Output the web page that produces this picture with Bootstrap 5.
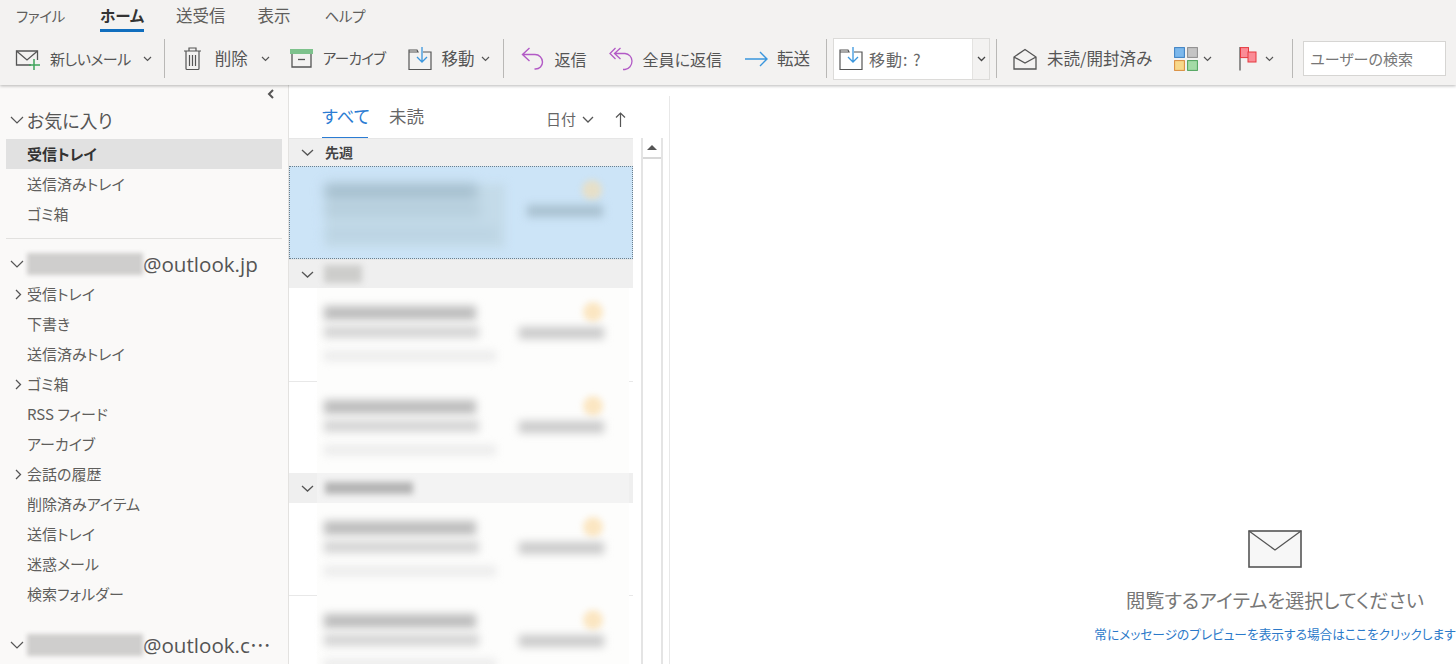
<!DOCTYPE html>
<html lang="ja">
<head>
<meta charset="UTF-8">
<title>Outlook</title>
<link href="https://cdn.jsdelivr.net/npm/bootstrap@5.3.0/dist/css/bootstrap.min.css" rel="stylesheet">
<style>
html, body { height: 100%; overflow: hidden; }
body { font-family: "Noto Sans CJK JP", "Liberation Sans", sans-serif; color: #555; background: #fff; font-size: 16px; font-feature-settings: "palt"; }
.app { width: 1456px; height: 664px; }

/* ribbon */
.ribbon { height: 85px; background: #f3f2f1; box-shadow: 0 1px 3px rgba(0,0,0,.28); position: relative; z-index: 2; }
.tabs { height: 32px; padding-left: 16px; gap: 32px; font-size: 16.5px; }
.tab-item { height: 32px; line-height: 31px; color: #605e5c; white-space: nowrap; }
.tab-kana { font-size: 14.5px; letter-spacing: -.3px; }
.tab-help { margin-left: 2px; }
.tab-item.on { color: #333; font-size: 15.5px; font-weight: 700; border-bottom: 3px solid #106ebe; width: 44px; margin-left: 3px; text-align: center; }
.tools { height: 53px; padding-left: 15px; }
.tool { white-space: nowrap; line-height: 1; }
.tool svg { display: block; flex: none; }
.txt-kanji { font-size: 16.5px; }
.txt-kana { font-size: 15px; letter-spacing: -.5px; }
.txt-arch { font-size: 14.5px; letter-spacing: -.6px; }
.vsep { width: 1px; height: 39px; background: #b9b8b6; flex: none; }
.chev { flex: none; }
.combo { width: 157px; height: 42px; background: #fff; border: 1px solid #dcdbd9; flex: none; }
.combo-label { font-size: 16px; letter-spacing: 1px; font-feature-settings: normal; color: #666; }
.combo-btn { width: 17px; background: #f3f2f1; border-left: 1px solid #e4e3e1; }
.search-box { width: 143px; height: 35px; border: 1px solid #d6d5d3; background: #fff; color: #777; font-size: 15px; padding-left: 6px; line-height: 33px; flex: none; white-space: nowrap; }

/* folders */
.folders { width: 289px; background: #faf9f8; border-right: 1px solid #e3e2e0; flex: none; }
.collapse-arrow { height: 21px; padding-right: 13px; padding-top: 4px; }
.fold-head { height: 28px; font-size: 18px; color: #555; padding-left: 10px; gap: 3px; white-space: nowrap; margin-bottom: 5px; }
.fold-acct { height: 30px; margin-bottom: 0; }
.fold-last { margin-top: 21px; }
.acct-text { margin-left: -3px; font-family: "Open Sans", "Noto Sans CJK JP", sans-serif; font-size: 20.6px; }
.fold-row { height: 30px; line-height: 29px; padding-left: 27px; font-size: 15px; color: #5f5e5c; position: relative; white-space: nowrap; }
.fold-row.sel { margin: 0 6px; padding-left: 21px; background: #e1e1e1; font-weight: 700; color: #333; }
.fold-exp { position: absolute; left: 15px; top: 10px; }
.fold-rule { height: 1px; background: #e2e1df; margin: 9px 6px 10px; }
.blur-name { width: 116px; height: 22px; background: #cfcecd; filter: blur(2px); flex: none; }

/* list */
.list-col { width: 352px; flex: none; margin-top: 11px; }
.list-main { width: 344px; }
.filters { height: 42px; padding-left: 33px; padding-right: 7px; }
.flt { font-size: 17.5px; height: 42px; line-height: 40px; color: #666; white-space: nowrap; }
.flt.on { color: #2b7cd3; border-bottom: 1px solid #2b7cd3; width: 46px; margin-right: 21px; text-align: center; }
.sorter { font-size: 15px; color: #666; height: 46px; }
.grp { background: #efefef; padding-left: 12px; font-size: 14px; font-weight: 700; color: #444; border-top: 1px solid #e6e6e6; position: relative; height: 29px; }
.grp-first { height: 28px; }
.grp-tall { height: 30px; border-top: 0; }
.msg { height: 93px; border-bottom: 1px solid #e8e8e8; position: relative; }
.msg-a { height: 94px; }
.msg-b { height: 91px; border-bottom: 0; }
.msg.picked { background: #cce4f7; border: 1px dotted #6d7f8c; }
.patch { position: absolute; left: 28px; right: 4px; top: 0; bottom: -1px; background: #fdfdfc; padding: 18px 25px 0 7px; }
.msg.picked .patch { background: transparent; padding-top: 17px; }
.lines { width: 180px; }
.msg.picked .lines { background: #c4dbe9; filter: blur(4px); height: 64px; }
.bar { filter: blur(4px); }
.bar-a { width: 152px; height: 14px; margin-bottom: 6px; background: #bdbdbd; }
.bar-b { width: 155px; height: 12px; margin-bottom: 13px; background: #d4d4d4; }
.bar-c { width: 172px; height: 10px; background: #ebebeb; }
.msg.picked .bar-a { background: #a3bccb; }
.msg.picked .bar-b { background: #b4ccda; }
.msg.picked .bar-c { background: #b9d2e1; }
.meta { width: 92px; margin-top: -4px; }
.dot { width: 20px; height: 20px; border-radius: 50%; background: #fbe6c2; filter: blur(3px); margin: 0 1px 5px 0; }
.msg.picked .dot { background: #e6dfc8; }
.msg-date { width: 85px; height: 12px; background: #cacaca; filter: blur(4px); }
.msg.picked .msg-date { background: #a9c1d0; width: 76px; }
.grp-patch { position: absolute; left: 28px; right: 4px; top: 0; bottom: 0; background: #f3f3f3; padding: 9px 0 0 8px; }
.grp-bar { width: 88px; height: 12px; background: #b4b4b4; filter: blur(3px); }
.grp-blur { width: 38px; height: 18px; margin-left: 10px; background: #cdcdcb; filter: blur(3px); }

/* scrollbar */
.scroll-track { width: 22px; flex: none; border-left: 2px solid #e4e4e4; border-right: 2px solid #e4e4e4; margin-top: 53px; }
.scroll-up { height: 21px; border-bottom: 2px solid #d8d8d8; background: #fff; }

/* reading pane */
.reading { padding-bottom: 22px; margin-left: 6px; border-left: 1px solid #e8e8e8; margin-top: 11px; overflow: hidden; }
.read-title { font-size: 19.2px; color: #777; margin-top: 19px; line-height: 26px; white-space: nowrap; }
.read-link { font-size: 12.7px; color: #2b79c9; margin-top: 13px; white-space: nowrap; line-height: 16px; }
.read-box { width: 362px; }
</style>
</head>
<body>
<div class="app d-flex flex-column">

  <!-- ribbon -->
  <div class="ribbon">
    <div class="tabs d-flex">
      <div class="tab-item tab-kana">ファイル</div>
      <div class="tab-item on">ホーム</div>
      <div class="tab-item">送受信</div>
      <div class="tab-item">表示</div>
      <div class="tab-item tab-kana tab-help">ヘルプ</div>
    </div>
    <div class="tools d-flex align-items-center">
      <div class="tool d-flex align-items-center">
        <svg width="26" height="24" viewBox="0 0 26 24" fill="none"><path d="M16 18H1.5V4h21v9" stroke="#555" stroke-width="1.3"/><path d="M1.5 4l10.5 9 10.5-9" stroke="#555" stroke-width="1.3"/><path d="M19 12v11M14 18h11" stroke="#3fa45b" stroke-width="1.5"/></svg>
        <span class="txt-kana" style="margin-left:9px">新しいメール</span>
        <svg class="chev" style="margin-left:12px" width="9" height="6" viewBox="0 0 9 6" fill="none"><path d="M1 1l3.5 3.5L8 1" stroke="#555" stroke-width="1.2"/></svg>
      </div>
      <div class="vsep" style="margin-left:12px"></div>
      <div class="tool d-flex align-items-center" style="margin-left:18px">
        <svg width="19" height="25" viewBox="0 0 19 25" fill="none" stroke="#555" stroke-width="1.2"><path d="M1 5h17M6 5V2h7v3M3 5v17.5a1 1 0 0 0 1 1h11a1 1 0 0 0 1-1V5M6.5 9v11M9.5 9v11M12.5 9v11"/></svg>
        <span class="txt-kanji" style="margin-left:13px">削除</span>
        <svg class="chev" style="margin-left:13px" width="9" height="6" viewBox="0 0 9 6" fill="none"><path d="M1 1l3.5 3.5L8 1" stroke="#555" stroke-width="1.2"/></svg>
      </div>
      <div class="tool d-flex align-items-center" style="margin-left:20px">
        <svg width="23" height="19" viewBox="0 0 23 19" fill="none"><rect x="0" y="0" width="23" height="5" fill="#7dc28c"/><path d="M2 5v13h19V5" stroke="#555" stroke-width="1.3"/><path d="M8 10.5h7" stroke="#555" stroke-width="1.3"/></svg>
        <span class="txt-arch" style="margin-left:10px">アーカイブ</span>
      </div>
      <div class="tool d-flex align-items-center" style="margin-left:22px">
        <svg width="24" height="24" viewBox="0 0 24 24" fill="none"><path d="M1 5V3h8l1 2H1v17.5h22V5h-8" stroke="#555" stroke-width="1.2"/><path d="M14 0v15M9 10l5 5 5-5" stroke="#3a96dd" stroke-width="1.3"/></svg>
        <span class="txt-kanji" style="margin-left:10px">移動</span>
        <svg class="chev" style="margin-left:6px" width="9" height="6" viewBox="0 0 9 6" fill="none"><path d="M1 1l3.5 3.5L8 1" stroke="#555" stroke-width="1.2"/></svg>
      </div>
      <div class="vsep" style="margin-left:13px"></div>
      <div class="tool d-flex align-items-center" style="margin-left:17px">
        <svg width="23" height="24" viewBox="0 0 23 24" fill="none" stroke="#b25ac6" stroke-width="1.4"><path d="M8.5 1L1.5 7.5l7 6.500M1.5 7.500H14a7.500 7.500 0 0 1 7.500 7.500c0 4-3 7-7 7h-1"/></svg>
        <span style="margin-left:11px">返信</span>
      </div>
      <div class="tool d-flex align-items-center" style="margin-left:22px">
        <svg width="24" height="24" viewBox="0 0 24 24" fill="none" stroke="#b25ac6" stroke-width="1.3"><path d="M6.500 1L1 6.500 6.500 12M11.500 1L5.500 6.500l6 5.500M5.500 6.500H16a7.500 7.500 0 0 1 7 7.500c0 4.500-3 8-7 8.500h-2"/></svg>
        <span style="margin-left:10px">全員に返信</span>
      </div>
      <div class="tool d-flex align-items-center" style="margin-left:23px">
        <svg width="23" height="16" viewBox="0 0 23 16" fill="none" stroke="#3a96dd" stroke-width="1.4"><path d="M0 8h22M15 1l7 7-7 7"/></svg>
        <span class="txt-kanji" style="margin-left:9px">転送</span>
      </div>
      <div class="vsep" style="margin-left:16px"></div>
      <div class="combo d-flex" style="margin-left:6px">
        <div class="flex-grow-1 d-flex align-items-center" style="padding-left:5px">
          <svg width="24" height="24" viewBox="0 0 24 24" fill="none"><path d="M1 5V3h8l1 2H1v17.500h22V5h-8" stroke="#555" stroke-width="1.2"/><path d="M14 0v15M9 10l5 5 5-5" stroke="#3a96dd" stroke-width="1.3"/></svg>
          <span class="combo-label" style="margin-left:6px">移動: ?</span>
        </div>
        <div class="combo-btn d-flex align-items-center justify-content-center">
          <svg width="9" height="6" viewBox="0 0 9 6" fill="none"><path d="M1 1l3.500 3.500L8 1" stroke="#444" stroke-width="1.300"/></svg>
        </div>
      </div>
      <div class="vsep" style="margin-left:6px"></div>
      <div class="tool d-flex align-items-center" style="margin-left:16px">
        <svg width="24" height="22" viewBox="0 0 24 22" fill="none" stroke="#555" stroke-width="1.300"><path d="M1 9v12h22V9L12 1.500zM1 9l11 6 11-6"/></svg>
        <span class="txt-kanji" style="margin-left:10px">未読/開封済み</span>
      </div>
      <div class="tool d-flex align-items-center" style="margin-left:22px">
        <svg width="24" height="24" viewBox="0 0 24 24"><rect x=".6" y=".6" width="9.800" height="9.800" fill="#7cb8ec" stroke="#3a7fc2"/><rect x="13.600" y=".6" width="9.800" height="9.800" fill="#c4c4c4" stroke="#8c8c8c"/><rect x=".6" y="13.600" width="9.800" height="9.800" fill="#f8d88a" stroke="#d98b3a"/><rect x="13.600" y="13.600" width="9.800" height="9.800" fill="#a4dba6" stroke="#4ca25a"/></svg>
        <svg class="chev" style="margin-left:5px" width="9" height="6" viewBox="0 0 9 6" fill="none"><path d="M1 1l3.500 3.500L8 1" stroke="#555" stroke-width="1.200"/></svg>
      </div>
      <div class="tool d-flex align-items-center" style="margin-left:27px">
        <svg width="18" height="24" viewBox="0 0 18 24"><path d="M1 0v23.500" stroke="#777" stroke-width="1.600"/><rect x="1.500" y=".6" width="8" height="10" fill="#fb8c96" stroke="#e5393f"/><rect x="9" y="5" width="8" height="10" fill="#fb8c96" stroke="#e5393f"/></svg>
        <svg class="chev" style="margin-left:8px" width="9" height="6" viewBox="0 0 9 6" fill="none"><path d="M1 1l3.500 3.500L8 1" stroke="#555" stroke-width="1.200"/></svg>
      </div>
      <div class="vsep" style="margin-left:18px"></div>
      <div class="search-box" style="margin-left:10px">ユーザーの検索</div>
    </div>
  </div>

  <div class="d-flex flex-grow-1 overflow-hidden">
    <!-- folder pane -->
    <div class="folders">
      <div class="collapse-arrow d-flex justify-content-end">
        <svg width="8" height="10" viewBox="0 0 8 10" fill="none"><path d="M6 1L2 5l4 4" stroke="#555" stroke-width="2"/></svg>
      </div>
      <div class="fold-head d-flex align-items-center">
        <svg width="14" height="8" viewBox="0 0 14 8" fill="none"><path d="M1 1l6 6 6-6" stroke="#555" stroke-width="1.200"/></svg>
        <span>お気に入り</span>
      </div>
      <div class="fold-row sel">受信トレイ</div>
      <div class="fold-row">送信済みトレイ</div>
      <div class="fold-row">ゴミ箱</div>
      <div class="fold-rule"></div>
      <div class="fold-head fold-acct d-flex align-items-center">
        <svg width="14" height="8" viewBox="0 0 14 8" fill="none"><path d="M1 1l6 6 6-6" stroke="#555" stroke-width="1.200"/></svg>
        <div class="blur-name"></div><span class="acct-text">@outlook.jp</span>
      </div>
      <div class="fold-row"><svg class="fold-exp" width="7" height="11" viewBox="0 0 7 11" fill="none"><path d="M1 1l4.500 4.500L1 10" stroke="#555" stroke-width="1.300"/></svg>受信トレイ</div>
      <div class="fold-row">下書き</div>
      <div class="fold-row">送信済みトレイ</div>
      <div class="fold-row"><svg class="fold-exp" width="7" height="11" viewBox="0 0 7 11" fill="none"><path d="M1 1l4.500 4.500L1 10" stroke="#555" stroke-width="1.300"/></svg>ゴミ箱</div>
      <div class="fold-row">RSS フィード</div>
      <div class="fold-row">アーカイブ</div>
      <div class="fold-row"><svg class="fold-exp" width="7" height="11" viewBox="0 0 7 11" fill="none"><path d="M1 1l4.500 4.500L1 10" stroke="#555" stroke-width="1.300"/></svg>会話の履歴</div>
      <div class="fold-row">削除済みアイテム</div>
      <div class="fold-row">送信トレイ</div>
      <div class="fold-row">迷惑メール</div>
      <div class="fold-row">検索フォルダー</div>
      <div class="fold-head fold-acct fold-last d-flex align-items-center">
        <svg width="14" height="8" viewBox="0 0 14 8" fill="none"><path d="M1 1l6 6 6-6" stroke="#555" stroke-width="1.200"/></svg>
        <div class="blur-name"></div><span class="acct-text">@outlook.c⋯</span>
      </div>
    </div>

    <!-- message list -->
    <div class="list-col">
      <div class="list-main">
        <div class="filters d-flex">
          <div class="flt on">すべて</div>
          <div class="flt">未読</div>
          <div class="sorter ms-auto d-flex align-items-center">
            <span>日付</span>
            <svg style="margin-left:6px" width="12" height="7" viewBox="0 0 12 7" fill="none"><path d="M1 1l5 5 5-5" stroke="#555" stroke-width="1.300"/></svg>
            <svg style="margin-left:21px" width="11" height="15" viewBox="0 0 11 15" fill="none"><path d="M5.500 15V1M1 5.500L5.500 1 10 5.500" stroke="#555" stroke-width="1.200"/></svg>
          </div>
        </div>
        <div class="grp grp-first d-flex align-items-center">
          <svg width="13" height="7" viewBox="0 0 13 7" fill="none"><path d="M1 1l5.500 5L12 1" stroke="#555" stroke-width="1.300"/></svg>
          <span style="margin-left:11px">先週</span>
        </div>
        <div class="msg picked">
          <div class="patch d-flex justify-content-between">
            <div class="lines"><div class="bar bar-a"></div><div class="bar bar-b"></div><div class="bar bar-c"></div></div>
            <div class="meta d-flex flex-column align-items-end"><div class="dot"></div><div class="msg-date"></div></div>
          </div>
        </div>
        <div class="grp d-flex align-items-center">
          <svg width="13" height="7" viewBox="0 0 13 7" fill="none"><path d="M1 1l5.500 5L12 1" stroke="#555" stroke-width="1.300"/></svg>
          <div class="grp-blur"></div>
        </div>
        <div class="msg msg-a">
          <div class="patch d-flex justify-content-between">
            <div class="lines"><div class="bar bar-a"></div><div class="bar bar-b"></div><div class="bar bar-c"></div></div>
            <div class="meta d-flex flex-column align-items-end"><div class="dot"></div><div class="msg-date"></div></div>
          </div>
        </div>
        <div class="msg msg-b">
          <div class="patch d-flex justify-content-between">
            <div class="lines"><div class="bar bar-a"></div><div class="bar bar-b"></div><div class="bar bar-c"></div></div>
            <div class="meta d-flex flex-column align-items-end"><div class="dot"></div><div class="msg-date"></div></div>
          </div>
        </div>
        <div class="grp grp-tall d-flex align-items-center">
          <svg width="13" height="7" viewBox="0 0 13 7" fill="none"><path d="M1 1l5.500 5L12 1" stroke="#555" stroke-width="1.300"/></svg>
          <div class="grp-patch"><div class="grp-bar"></div></div>
        </div>
        <div class="msg">
          <div class="patch d-flex justify-content-between">
            <div class="lines"><div class="bar bar-a"></div><div class="bar bar-b"></div><div class="bar bar-c"></div></div>
            <div class="meta d-flex flex-column align-items-end"><div class="dot"></div><div class="msg-date"></div></div>
          </div>
        </div>
        <div class="msg">
          <div class="patch d-flex justify-content-between">
            <div class="lines"><div class="bar bar-a"></div><div class="bar bar-b"></div><div class="bar bar-c"></div></div>
            <div class="meta d-flex flex-column align-items-end"><div class="dot"></div><div class="msg-date"></div></div>
          </div>
        </div>
      </div>
    </div>

    <!-- scrollbar -->
    <div class="scroll-track">
      <div class="scroll-up d-flex align-items-center justify-content-center">
        <svg width="10" height="5" viewBox="0 0 10 5"><path d="M5 0l5 5H0z" fill="#555"/></svg>
      </div>
    </div>

    <!-- reading pane -->
    <div class="reading flex-grow-1 d-flex flex-column justify-content-end align-items-end">
      <div class="read-box d-flex flex-column align-items-center">
        <svg width="54" height="38" viewBox="0 0 54 38" fill="none"><rect x="1" y="1" width="52" height="36" fill="#f7f7f7" stroke="#555" stroke-width="1.600"/><path d="M1 1l26 19L53 1" stroke="#555" stroke-width="1.300"/></svg>
        <div class="read-title">閲覧するアイテムを選択してください</div>
        <div class="read-link">常にメッセージのプレビューを表示する場合はここをクリックします</div>
      </div>
    </div>
  </div>
</div>
<script src="https://cdn.jsdelivr.net/npm/bootstrap@5.3.0/dist/js/bootstrap.bundle.min.js"></script>
</body>
</html>
